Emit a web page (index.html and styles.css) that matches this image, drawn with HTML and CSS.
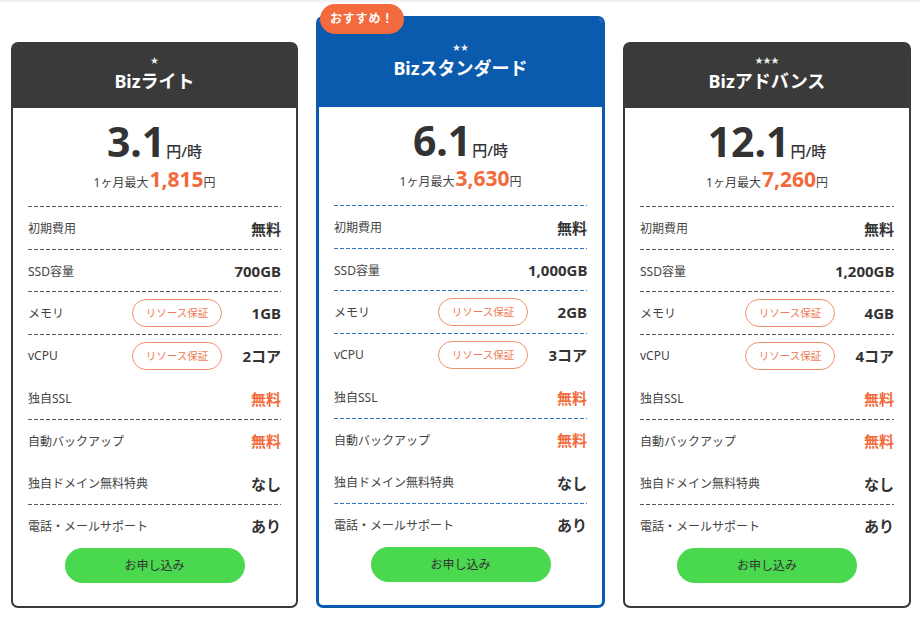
FILE: index.html
```html
<!DOCTYPE html>
<html lang="ja">
<head>
<meta charset="utf-8">
<title>Biz プラン</title>
<link rel="stylesheet" href="styles.css">
</head>
<body>
<div class="topline"></div>
<main class="plans">
  <section class="plan plan--dark">
    <header class="plan-head">
      <div class="stars">★</div>
      <h2 class="plan-name">Bizライト</h2>
    </header>
    <div class="plan-body">
      <div class="price"><span class="price-num">3.1</span><span class="price-unit">円/時</span></div>
      <div class="monthly">1ヶ月最大<span class="monthly-num">1,815</span>円</div>
      <ul class="specs">
        <li class="spec"><span class="spec-label">初期費用</span><span class="spec-val">無料</span></li>
        <li class="spec"><span class="spec-label">SSD容量</span><span class="spec-val">700GB</span></li>
        <li class="spec"><span class="spec-label">メモリ</span><span class="tag">リソース保証</span><span class="spec-val">1GB</span></li>
        <li class="spec"><span class="spec-label">vCPU</span><span class="tag">リソース保証</span><span class="spec-val">2コア</span></li>
        <li class="spec spec--noline"><span class="spec-label">独自SSL</span><span class="spec-val spec-val--free">無料</span></li>
        <li class="spec"><span class="spec-label">自動バックアップ</span><span class="spec-val spec-val--free">無料</span></li>
        <li class="spec spec--noline"><span class="spec-label">独自ドメイン無料特典</span><span class="spec-val">なし</span></li>
        <li class="spec"><span class="spec-label">電話・メールサポート</span><span class="spec-val">あり</span></li>
      </ul>
      <a class="apply" href="#">お申し込み</a>
    </div>
  </section>

  <section class="plan plan--blue">
    <div class="badge">おすすめ！</div>
    <header class="plan-head">
      <div class="stars">★★</div>
      <h2 class="plan-name">Bizスタンダード</h2>
    </header>
    <div class="plan-body">
      <div class="price"><span class="price-num">6.1</span><span class="price-unit">円/時</span></div>
      <div class="monthly">1ヶ月最大<span class="monthly-num">3,630</span>円</div>
      <ul class="specs">
        <li class="spec"><span class="spec-label">初期費用</span><span class="spec-val">無料</span></li>
        <li class="spec"><span class="spec-label">SSD容量</span><span class="spec-val">1,000GB</span></li>
        <li class="spec"><span class="spec-label">メモリ</span><span class="tag">リソース保証</span><span class="spec-val">2GB</span></li>
        <li class="spec"><span class="spec-label">vCPU</span><span class="tag">リソース保証</span><span class="spec-val">3コア</span></li>
        <li class="spec spec--noline"><span class="spec-label">独自SSL</span><span class="spec-val spec-val--free">無料</span></li>
        <li class="spec"><span class="spec-label">自動バックアップ</span><span class="spec-val spec-val--free">無料</span></li>
        <li class="spec spec--noline"><span class="spec-label">独自ドメイン無料特典</span><span class="spec-val">なし</span></li>
        <li class="spec"><span class="spec-label">電話・メールサポート</span><span class="spec-val">あり</span></li>
      </ul>
      <a class="apply" href="#">お申し込み</a>
    </div>
  </section>

  <section class="plan plan--dark">
    <header class="plan-head">
      <div class="stars">★★★</div>
      <h2 class="plan-name">Bizアドバンス</h2>
    </header>
    <div class="plan-body">
      <div class="price"><span class="price-num">12.1</span><span class="price-unit">円/時</span></div>
      <div class="monthly">1ヶ月最大<span class="monthly-num">7,260</span>円</div>
      <ul class="specs">
        <li class="spec"><span class="spec-label">初期費用</span><span class="spec-val">無料</span></li>
        <li class="spec"><span class="spec-label">SSD容量</span><span class="spec-val">1,200GB</span></li>
        <li class="spec"><span class="spec-label">メモリ</span><span class="tag">リソース保証</span><span class="spec-val">4GB</span></li>
        <li class="spec"><span class="spec-label">vCPU</span><span class="tag">リソース保証</span><span class="spec-val">4コア</span></li>
        <li class="spec spec--noline"><span class="spec-label">独自SSL</span><span class="spec-val spec-val--free">無料</span></li>
        <li class="spec"><span class="spec-label">自動バックアップ</span><span class="spec-val spec-val--free">無料</span></li>
        <li class="spec spec--noline"><span class="spec-label">独自ドメイン無料特典</span><span class="spec-val">なし</span></li>
        <li class="spec"><span class="spec-label">電話・メールサポート</span><span class="spec-val">あり</span></li>
      </ul>
      <a class="apply" href="#">お申し込み</a>
    </div>
  </section>
</main>
</body>
</html>
```

FILE: styles.css
```css
* { box-sizing: border-box; }

html, body {
  margin: 0;
  padding: 0;
  background: #fff;
}

body {
  font-family: "Noto Sans", "Noto Sans CJK JP", sans-serif;
  color: #333;
}

.topline {
  height: 2px;
  background: #f2f2f2;
}

.plans {
  display: grid;
  grid-template-columns: 287px 289px 288px;
  column-gap: 18px;
  align-items: end;
  padding: 14px 0 0 11px;
}

.plan {
  position: relative;
  background: #fff;
  border: 2px solid #3a3a3a;
  border-radius: 7px;
}

.plan--blue {
  border: 3px solid #0a5bae;
}

.plan-head {
  height: 64px;
  background: #3a3a3a;
  border-radius: 4px 4px 0 0;
  color: #fff;
  display: flex;
  flex-direction: column;
  align-items: center;
  justify-content: center;
  padding-bottom: 4px;
}

.plan--blue .plan-head {
  height: 88px;
  background: #0a5bae;
  padding-bottom: 4px;
}

.stars {
  font-size: 8px;
  line-height: 10px;
  letter-spacing: 0;
  color: #f4f4f4;
}

.plan-name {
  margin: 4px 0 0;
  font-size: 18px;
  line-height: 24px;
  font-weight: 700;
  color: #fff;
}

.badge {
  position: absolute;
  top: -15px;
  left: 1px;
  width: 84px;
  height: 30px;
  border-radius: 15px;
  background: #f26a3d;
  color: #fff;
  font-size: 12px;
  font-weight: 700;
  line-height: 30px;
  text-align: center;
  letter-spacing: 0.8px;
}

.plan-body {
  padding: 11px 15px 23px;
  display: flex;
  flex-direction: column;
  align-items: center;
}

.price {
  height: 44px;
  line-height: 44px;
  white-space: nowrap;
}

.price-num {
  font-size: 41px;
  font-weight: 700;
  color: #333;
  letter-spacing: 0;
}

.price-unit {
  font-size: 15px;
  font-weight: 500;
  color: #333;
  margin-left: 1px;
}

.monthly {
  margin-top: 4px;
  height: 24px;
  line-height: 24px;
  font-size: 12px;
  color: #444;
  white-space: nowrap;
}

.monthly-num {
  font-size: 21px;
  font-weight: 700;
  color: #f26a3a;
  margin-left: 1px;
}

.specs {
  list-style: none;
  margin: 15px 0 0;
  padding: 0;
  width: 100%;
}

.spec {
  height: 42.5px;
  display: flex;
  align-items: center;
  padding-top: 2px;
  background-image: repeating-linear-gradient(to right, #5a5a5a 0 4px, transparent 4px 6px);
  background-size: 100% 1px;
  background-repeat: no-repeat;
  background-position: 0 0;
}

.plan--blue .spec {
  background-image: repeating-linear-gradient(to right, #2f78c8 0 4px, transparent 4px 6px);
}

.spec.spec--noline {
  background-image: none;
}

.spec-label {
  flex: 1;
  font-size: 12px;
  color: #444;
  white-space: nowrap;
}

.tag {
  width: 90px;
  height: 28px;
  border: 1px solid #f0906c;
  border-radius: 14px;
  color: #f07a52;
  font-size: 10.5px;
  line-height: 26px;
  text-align: center;
  white-space: nowrap;
}

.spec-val {
  width: 59px;
  text-align: right;
  font-size: 15px;
  font-weight: 700;
  color: #333;
  white-space: nowrap;
}

.spec-val--free {
  color: #f26a3a;
}

.apply {
  display: block;
  margin-top: 2px;
  width: 180px;
  height: 35px;
  border-radius: 18px;
  background: #4ad84e;
  color: #333;
  font-size: 12px;
  line-height: 35px;
  text-align: center;
  text-decoration: none;
}
```
